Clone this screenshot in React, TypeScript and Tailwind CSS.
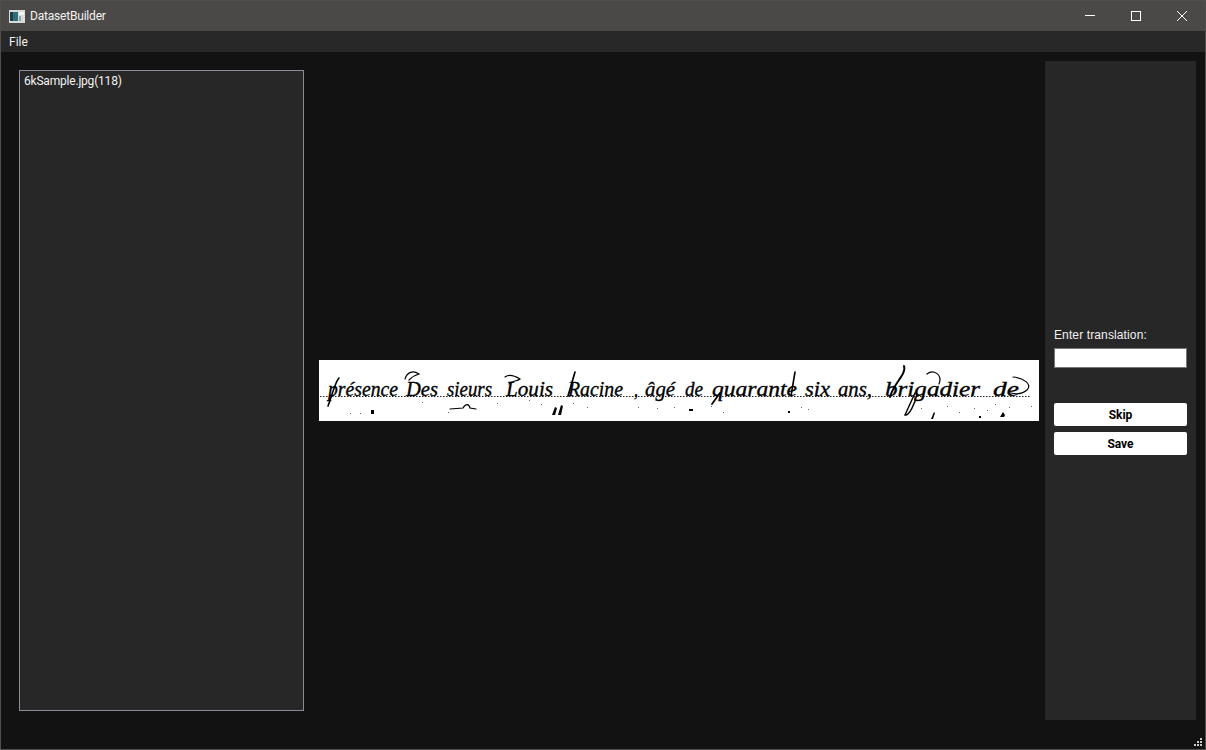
const uiFont = "font-['Roboto','Noto_Sans',sans-serif]";

// handwritten words of the scanned line: x, width in the 720x61 picture
const words = [
  { t: "présence", x: 9, w: 70 },
  { t: "Des", x: 87, w: 32 },
  { t: "sieurs", x: 128, w: 45 },
  { t: "Louis", x: 187, w: 47 },
  { t: "Racine", x: 249, w: 55 },
  { t: ",", x: 315, w: 4 },
  { t: "âgé", x: 326, w: 30 },
  { t: "de", x: 366, w: 18 },
  { t: "quarante", x: 393, w: 85 },
  { t: "six", x: 486, w: 25 },
  { t: "ans,", x: 519, w: 34 },
  { t: "brigadier", x: 566, w: 95 },
  { t: "de", x: 674, w: 26 },
];

const specks = [
  [31, 53], [41, 53], [103, 42], [129, 52], [178, 43], [210, 40], [222, 44], [254, 43], [268, 47],
  [319, 47], [338, 48], [355, 47], [372, 50], [392, 46], [404, 52], [470, 52], [482, 47], [489, 49],
  [590, 44], [602, 48], [628, 46], [640, 52], [655, 48], [668, 50], [676, 44], [690, 47], [712, 46],
];

function Scan() {
  return (
    <svg width="720" height="61" viewBox="0 0 720 61" className="block shrink-0 bg-white">
      <line x1="1" y1="36.5" x2="712" y2="36.5" stroke="#222" strokeWidth="1" strokeDasharray="1.5 1.5" />
      {words.map((w) => (
        <text
          key={w.x}
          x={w.x}
          y={36}
          textLength={w.w}
          lengthAdjust="spacingAndGlyphs"
          fontFamily="Liberation Serif, serif"
          fontStyle="italic"
          fontSize="21"
          fill="#000"
          stroke="#000"
          strokeWidth="0.35"
        >
          {w.t}
        </text>
      ))}
      {/* pen flourishes and the tops of the next line */}
      <g fill="none" stroke="#000" strokeWidth="1.2" strokeLinecap="round">
        <path d="M9 46 C13 36 16 22 20 18" strokeWidth="1.6" />
        <path d="M86 19 C88 12 94 10 100 14 C96 15 93 17 90 20" />
        <path d="M186 17 C190 14 196 16 201 19 C198 22 193 20 190 24" />
        <path d="M256 12 L249 36" strokeWidth="1.7" />
        <path d="M401 33 L393 44" strokeWidth="1.8" />
        <path d="M476 12 L472 36" strokeWidth="1.6" />
        <path d="M585 6 C588 14 574 24 571 37" strokeWidth="1.9" />
        <path d="M596 33 L586 55 C590 56 596 44 598 34" strokeWidth="1.4" />
        <path d="M608 14 C614 9 624 14 620 24" />
        <path d="M694 17 C704 18 714 24 708 30 C702 35 696 34 692 33" />
        <path d="M131 49 L144 48 C147 43 150 44 151 48 L157 49" />
      </g>
      <g fill="#000">
        <rect x="52" y="50" width="3" height="4" />
        <path d="M233 55 L236 47 L238 48 L236 55 Z" />
        <path d="M239 55 L242 45 L244 46 L242 55 Z" />
        <path d="M612 59 L615 52 L616 53 L614 59 Z" />
        <path d="M681 57 L684 52 L686 55 L685 57 Z" />
        <rect x="469" y="51" width="2" height="2" />
        <rect x="370" y="49" width="4" height="2" />
        <rect x="660" y="56" width="2" height="2" />
        {specks.map(([x, y]) => (
          <rect key={`${x}-${y}`} x={x} y={y} width="1" height="1" opacity="0.6" />
        ))}
      </g>
    </svg>
  );
}

function AppIcon() {
  return (
    <svg width="16" height="13" viewBox="0 0 16 13" className="shrink-0">
      <rect width="16" height="13" fill="#d8dcdc" />
      <rect x="1" y="2" width="8" height="9" fill="#2f6f78" />
      <rect x="1" y="2" width="3" height="9" fill="#1e3f4c" />
      <rect x="10" y="2" width="5" height="3" fill="#f2f4f4" />
      <rect x="10" y="6" width="2" height="5" fill="#8fa3a6" />
    </svg>
  );
}

function TitleBar() {
  return (
    <div className="flex h-[30px] shrink-0 items-center bg-[#4a4947]">
      <div className="ml-[8px] flex items-center gap-[5px]">
        <AppIcon />
        <span className="text-[12px] tracking-[-0.2px] text-[#f2f2f2]">DatasetBuilder</span>
      </div>
      <div className="ml-auto flex items-center">
        <button className="flex h-[30px] w-[46px] items-center justify-center">
          <svg width="10" height="10" viewBox="0 0 10 10">
            <path d="M0 4.5H10" stroke="#fff" strokeWidth="1" />
          </svg>
        </button>
        <button className="flex h-[30px] w-[46px] items-center justify-center">
          <svg width="10" height="10" viewBox="0 0 10 10">
            <rect x="0.5" y="0.5" width="9" height="9" fill="none" stroke="#fff" strokeWidth="1" />
          </svg>
        </button>
        <button className="flex h-[30px] w-[46px] items-center justify-center">
          <svg width="10" height="10" viewBox="0 0 10 10">
            <path d="M0 0L10 10M10 0L0 10" stroke="#fff" strokeWidth="1" />
          </svg>
        </button>
      </div>
    </div>
  );
}

export default function App() {
  return (
    <div className={`relative flex h-[750px] w-[1206px] flex-col overflow-hidden border border-[#4f4f4d] bg-[#121212] ${uiFont}`}>
      <TitleBar />
      <div className="flex h-[21px] shrink-0 items-center bg-[#282828] pl-[8px] text-[12px] text-[#f2f2f2]">File</div>
      <div className="mt-[9px] flex h-[659px] items-center pl-[18px]">
        <div className="h-[641px] w-[285px] shrink-0 border border-[#8b8b95] bg-[#272727] px-[4px] py-[1px] text-[12px] tracking-[-0.2px] text-[#f2f2f2]">
          6kSample.jpg(118)
        </div>
        <div className="ml-[15px]">
          <Scan />
        </div>
        <div className="ml-[6px] flex h-full w-[151px] shrink-0 flex-col justify-center bg-[#272727] px-[9px] pt-[2px]">
          <label className="font-['Liberation_Sans',sans-serif] text-[12px] leading-[14px] tracking-[0.12px] text-[#f2f2f2]">Enter translation:</label>
          <input className="mt-[6px] h-[20px] w-[133px] border border-[#767676] bg-white" />
          <button className="mt-[35px] h-[23px] w-[133px] rounded-[2px] bg-white pt-[1px] text-[12px] font-bold text-black">Skip</button>
          <button className="mt-[6px] h-[23px] w-[133px] rounded-[2px] bg-white pt-[1px] text-[12px] font-bold text-black">Save</button>
        </div>
      </div>
      <svg width="9" height="9" viewBox="0 0 9 9" className="absolute right-[2px] bottom-[2px]">
        <g fill="#c8c8c8">
          <rect x="6" y="0" width="2" height="2" />
          <rect x="3" y="3" width="2" height="2" />
          <rect x="6" y="3" width="2" height="2" />
          <rect x="0" y="6" width="2" height="2" />
          <rect x="3" y="6" width="2" height="2" />
          <rect x="6" y="6" width="2" height="2" />
        </g>
      </svg>
    </div>
  );
}
